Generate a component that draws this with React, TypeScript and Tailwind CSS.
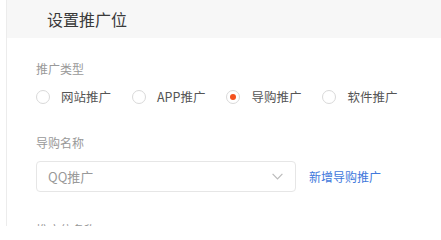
const options = [
  { label: "网站推广", checked: false },
  { label: "APP推广", checked: false },
  { label: "导购推广", checked: true },
  { label: "软件推广", checked: false },
];

const Radio = ({ checked }: { checked: boolean }) => (
  <span className="flex h-[14px] w-[14px] shrink-0 items-center justify-center rounded-full border border-[#d9d9d9] bg-white">
    {checked && <span className="h-[6px] w-[6px] rounded-full bg-[#f4511e]" />}
  </span>
);

const App = () => {
  return (
    <div
      className="h-[226px] w-[441px] overflow-hidden bg-white pl-[6px]"
      style={{ fontFamily: '"Noto Sans CJK SC", "Noto Sans", sans-serif' }}
    >
      <div className="h-full border-l border-[#ececec]">
        {/* 标题 */}
        <div className="flex h-[38px] items-center bg-[#f7f7f7] pl-[40px] text-[16px] text-[#3a3a3a]">
          设置推广位
        </div>

        <div className="pl-[29px] pt-[23px]">
          {/* 推广类型 */}
          <div className="text-[12px] leading-4 text-[#999]">推广类型</div>
          <div className="mt-[10px] flex h-5 items-center gap-[21px]">
            {options.map((o) => (
              <label key={o.label} className="flex items-center gap-[11px] text-[12.5px] text-[#555]">
                <Radio checked={o.checked} />
                {o.label}
              </label>
            ))}
          </div>

          {/* 导购名称 */}
          <div className="mt-[28px] text-[12px] leading-4 text-[#999]">导购名称</div>
          <div className="mt-[10px] flex items-center gap-[13px]">
            <div className="flex h-[31px] w-[260px] items-center justify-between rounded-[4px] border border-[#e6e6e6] pl-[11px] pr-[12px]">
              <span className="text-[13px] text-[#999]">QQ推广</span>
              <svg width="11" height="7" viewBox="0 0 11 7" fill="none">
                <polyline points="0.6,0.8 5.5,5.8 10.4,0.8" stroke="#bbb" strokeWidth="1.2" />
              </svg>
            </div>
            <a className="text-[12px] text-[#4178dc]">新增导购推广</a>
          </div>

          {/* 推广位名称 */}
          <div className="mt-[30px] text-[12px] leading-4 text-[#999]">推广位名称</div>
        </div>
      </div>
    </div>
  );
};

export default App;
